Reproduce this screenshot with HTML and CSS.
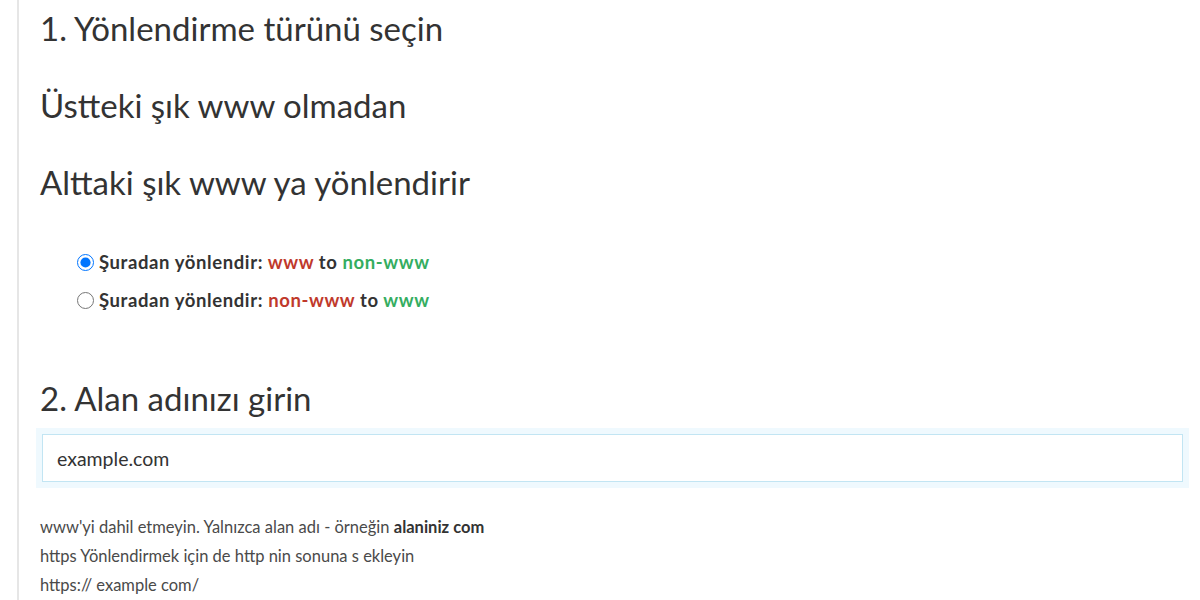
FILE: index.html
```html
<!DOCTYPE html>
<html lang="tr">
<head>
  <meta charset="utf-8">
  <title>www yönlendirme</title>
  <link rel="stylesheet" href="styles.css">
</head>
<body>
  <div class="content">
    <h3 class="step">1. Yönlendirme türünü seçin</h3>
    <h3 class="step">Üstteki şık www olmadan</h3>
    <h3 class="step">Alttaki şık www ya yönlendirir</h3>

    <div class="options">
      <label class="option">
        <input type="radio" name="type" value="nonwww" checked>Şuradan yönlendir: <span class="red">www</span> to <span class="green">non-www</span>
      </label>
      <label class="option">
        <input type="radio" name="type" value="www">Şuradan yönlendir: <span class="red">non-www</span> to <span class="green">www</span>
      </label>
    </div>

    <h3 class="step step-domain">2. Alan adınızı girin</h3>
    <div class="domain-wrap">
      <input class="domain" type="text" value="example.com">
    </div>

    <div class="hint">
      <p>www'yi dahil etmeyin. Yalnızca alan adı - örneğin <b>alaniniz com</b></p>
      <p>https Yönlendirmek için de http nin sonuna s ekleyin</p>
      <p>https:// example com/</p>
    </div>
  </div>
</body>
</html>
```

FILE: styles.css
```css
body { margin: 0; background: #fff; font-family: Lato, "Noto Sans", sans-serif; color: #333; }
.content { margin-left: 17px; border-left: 2px solid #e6e6e6; padding: 0 0 0 21px; height: 600px; box-sizing: border-box; overflow: hidden; }
.step { font-size: 33px; font-weight: 400; color: #333; margin: 0; line-height: 77px; }
.step:first-child { margin-top: -10px; }
.options { padding: 22px 0 49px 37px; }
.option { display: block; font-size: 18.5px; font-weight: bold; color: #333; line-height: 38px; letter-spacing: 0.6px; }
.option input { width: 17px; height: 17px; margin: 0 5px 0 0; vertical-align: -2px; }
.red { color: #c0392b; }
.green { color: #34ad60; }
.step-domain { line-height: 60px; }
.domain-wrap { margin-right: 11px; margin-left: -4px; padding: 6px; background: #eff9fe; }
.domain { display: block; width: 100%; box-sizing: border-box; height: 48px; padding: 0 14px; border: 1px solid #c2e5f3; font-family: inherit; font-size: 19.5px; color: #333; outline: none; }
.hint { margin-top: 25px; font-size: 16.5px; color: #4a4a4a; }
.hint b { color: #333; }
.hint p { margin: 0; line-height: 29px; }
```
